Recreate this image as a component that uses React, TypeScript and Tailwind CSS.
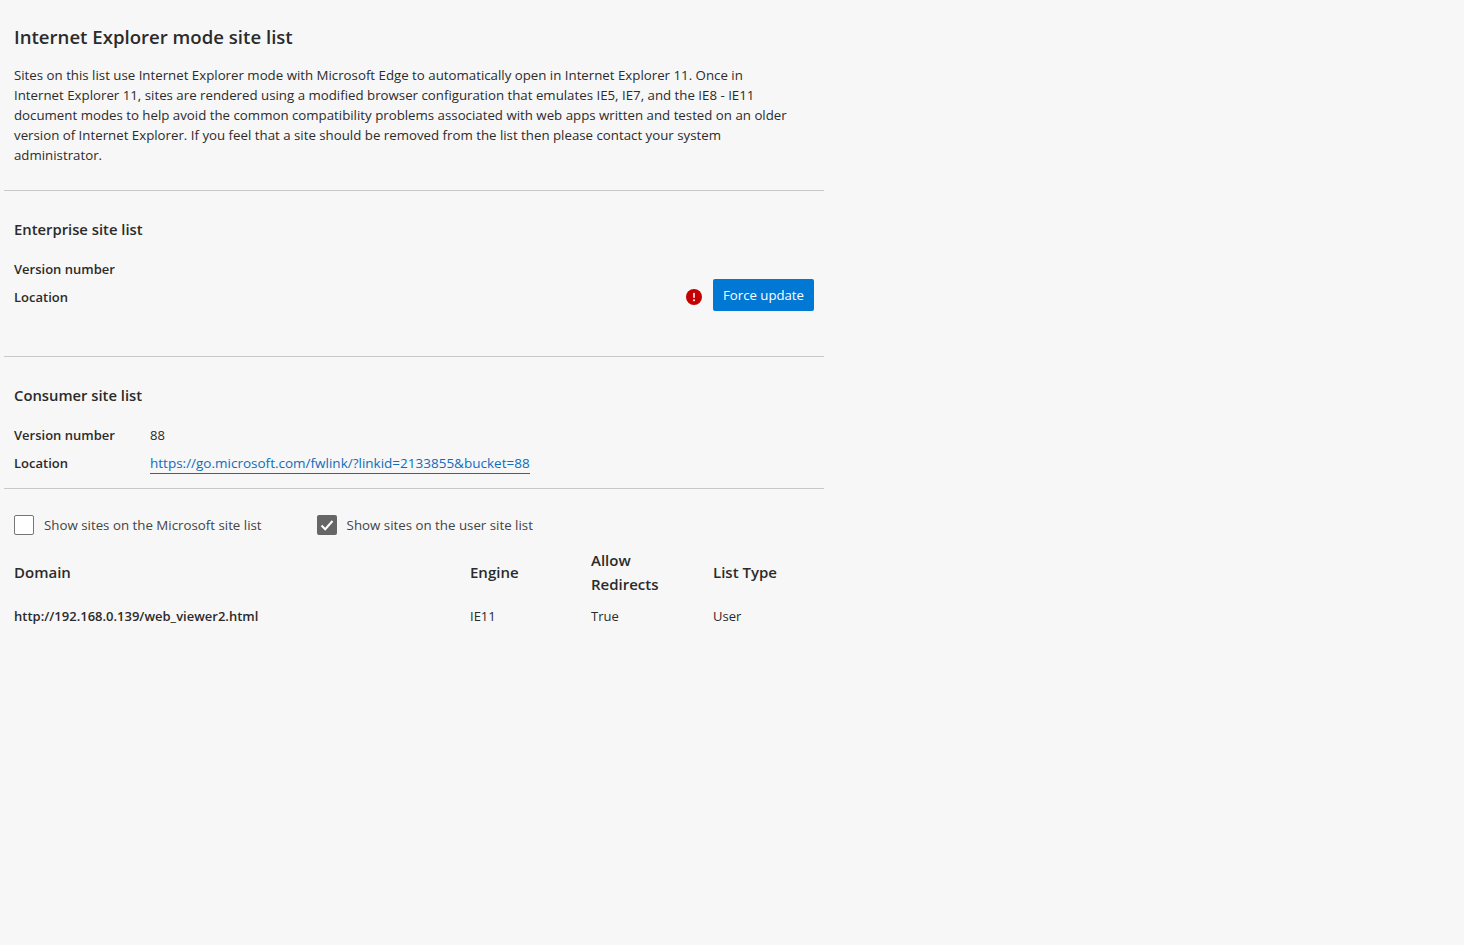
const font = { fontFamily: '"Open Sans", "Noto Sans", sans-serif' };

function InfoRow({ label, value, href }: { label: string; value?: string; href?: string }) {
  return (
    <div className="flex h-[28px] items-center">
      <div className="w-[136px] text-[13px] font-semibold">{label}</div>
      {value && <div className="text-[13px]">{value}</div>}
      {href && (
        <a href={href} className="border-b border-[#0f6cbd] pb-[2px] text-[13.5px] leading-[16px] text-[#0f6cbd]">
          {href}
        </a>
      )}
    </div>
  );
}

function Check({ checked, label }: { checked?: boolean; label: string }) {
  return (
    <label className="flex items-center gap-[10px] text-[13.3px] text-[#444]">
      <span
        className={
          checked
            ? "mb-[2px] flex h-5 w-5 items-center justify-center rounded-[2px] bg-[#666]"
            : "mb-[2px] h-5 w-5 rounded-[2px] border border-[#767676] bg-white"
        }
      >
        {checked && (
          <svg width="14" height="14" viewBox="0 0 14 14" fill="none" stroke="#fff" strokeWidth="2">
            <path d="M1.5 7.5 5.2 11.2 12.5 3" />
          </svg>
        )}
      </span>
      {label}
    </label>
  );
}

export default function App() {
  return (
    <div style={font} className="min-h-[945px] bg-[#f7f7f7] text-[#2b2b2b]">
      <div className="ml-[4px] w-[820px]">
        <section className="border-b border-[#c8c8c8] px-[10px] pt-[23px] pb-[25px]">
          <h1 className="text-[18.6px] leading-[28px] font-semibold">Internet Explorer mode site list</h1>
          <p className="mt-[14px] text-[13.27px] leading-[20px]">
            Sites on this list use Internet Explorer mode with Microsoft Edge to automatically open in Internet Explorer 11. Once in
            <br />
            Internet Explorer 11, sites are rendered using a modified browser configuration that emulates IE5, IE7, and the IE8 - IE11
            <br />
            document modes to help avoid the common compatibility problems associated with web apps written and tested on an older
            <br />
            version of Internet Explorer. If you feel that a site should be removed from the list then please contact your system
            <br />
            administrator.
          </p>
        </section>

        <section className="h-[166px] border-b border-[#c8c8c8] px-[10px] pt-[27px]">
          <h2 className="text-[14.8px] leading-[22px] font-semibold">Enterprise site list</h2>
          <div className="mt-[16px] flex items-end justify-between">
            <div>
              <InfoRow label="Version number" />
              <InfoRow label="Location" />
            </div>
            <div className="mb-[1px] flex items-center gap-[11px]">
              <svg width="16" height="16" viewBox="0 0 16 16" className="mt-[4px]">
                <circle cx="8" cy="8" r="8" fill="#c50000" />
                <rect x="7.2" y="3.8" width="1.6" height="5.2" rx="0.8" fill="#fff" />
                <circle cx="8" cy="11.2" r="1" fill="#fff" />
              </svg>
              <button className="h-[32px] w-[101px] rounded-[2px] bg-[#0078d4] pt-[1px] text-[13.2px] text-white">Force update</button>
            </div>
          </div>
        </section>

        <section className="h-[132px] border-b border-[#c8c8c8] px-[10px] pt-[27px]">
          <h2 className="text-[14.8px] leading-[22px] font-semibold">Consumer site list</h2>
          <div className="mt-[16px]">
            <InfoRow label="Version number" value="88" />
            <InfoRow label="Location" href="https://go.microsoft.com/fwlink/?linkid=2133855&bucket=88" />
          </div>
        </section>

        <div className="flex gap-[55px] px-[10px] pt-[26px]">
          <Check label="Show sites on the Microsoft site list" />
          <Check checked label="Show sites on the user site list" />
        </div>

        <div className="grid grid-cols-[456px_121px_122px_1fr] px-[10px]">
          <div className="flex h-[71px] items-center text-[15px] font-semibold">Domain</div>
          <div className="flex h-[71px] items-center text-[15px] font-semibold">Engine</div>
          <div className="flex h-[71px] items-center pb-[2px] text-[15px] leading-[24px] font-semibold">
            Allow
            <br />
            Redirects
          </div>
          <div className="flex h-[71px] items-center text-[15px] font-semibold">List Type</div>
          <div className="flex h-[18px] items-center text-[13px] font-semibold">http://192.168.0.139/web_viewer2.html</div>
          <div className="flex h-[18px] items-center text-[13px]">IE11</div>
          <div className="flex h-[18px] items-center text-[13px]">True</div>
          <div className="flex h-[18px] items-center text-[13px]">User</div>
        </div>
      </div>
    </div>
  );
}
